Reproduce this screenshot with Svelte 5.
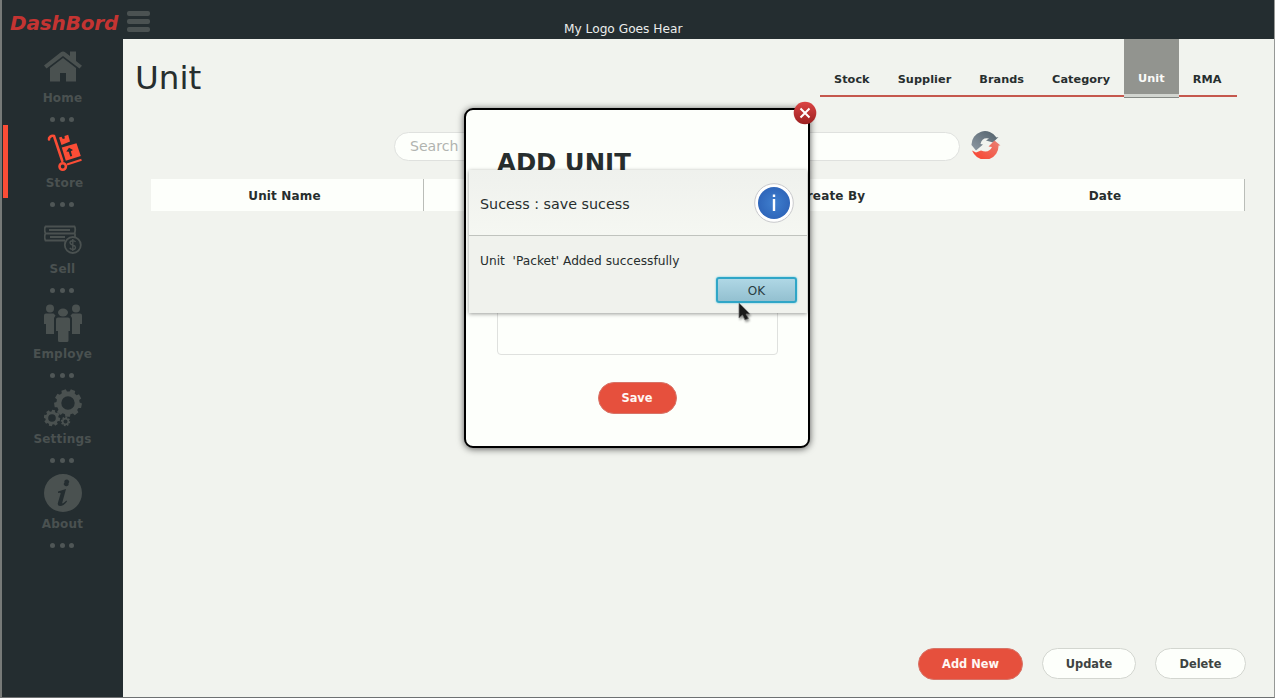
<script>
  const nav = ['Home', 'Store', 'Sell', 'Employe', 'Settings', 'About'];
  const tabs = ['Stock', 'Supplier', 'Brands', 'Category', 'Unit', 'RMA'];
  const activeNav = 'Store';
  const activeTab = 'Unit';

  // Outline of a toothed wheel centred on (cx, cy)
  function gear(cx, cy, outer, inner, teeth) {
    const points = [];
    const step = (Math.PI * 2) / teeth;
    for (let i = 0; i < teeth; i++) {
      const a = i * step + 0.2;
      for (const [r, o] of [[inner, -0.34], [outer, -0.24], [outer, 0.24], [inner, 0.34]]) {
        points.push(`${(cx + r * Math.cos(a + o * step)).toFixed(2)} ${(cy + r * Math.sin(a + o * step)).toFixed(2)}`);
      }
    }
    return `M${points.join('L')}Z`;
  }
  function hole(cx, cy, r) {
    return `M${cx - r} ${cy}a${r} ${r} 0 1 0 ${2 * r} 0a${r} ${r} 0 1 0 ${-2 * r} 0Z`;
  }
</script>

<div class="app">
  <header class="topbar">
    <div class="brand">
      <span class="brand-name">DashBord</span>
      <span class="burger"><i></i><i></i><i></i></span>
    </div>
    <div class="logo-text">My Logo Goes Hear</div>
  </header>

  <aside class="sidebar">
    {#each nav as item}
      <div class="nav-item" class:active={item === activeNav}>
        <svg class="nav-icon" viewBox="0 0 38 38" width="38" height="38">
          {#if item === 'Home'}
            <path d="M0 17.500L16.500 4.500Q19 2.500 21.500 4.500L26 8V3.500H32V13L38 17.800L35.500 20.500L19 8L2.500 20.500Z" />
            <path d="M6 20L19 10L32 20V33.500H22V25H16V33.500H6Z" />
          {:else if item === 'Store'}
            <path d="M5 6.500C4.500 4.500 7.500 2 10 3L18.300 28" fill="none" stroke="currentColor" stroke-width="2.600" stroke-linecap="round" />
            <path d="M15 4.500L17.500 3.800L18.800 6L20.800 5.500L20.500 3L24.200 1.800L26 8.500L17.500 12Z" />
            <path fill-rule="evenodd" d="M17.800 14.500L32.500 10.200L36.800 23L21.800 27.800ZM22.300 18.500L24.800 18.800L26.300 23.500L28.200 22.900L26.800 18.200L29 17L25 14.800Z" />
            <path d="M23 31.500L37.500 26.700" stroke="currentColor" stroke-width="2" />
            <circle cx="18.700" cy="33.500" r="3.200" fill="none" stroke="currentColor" stroke-width="2.600" />
          {:else if item === 'Sell'}
            <g fill="none" stroke="currentColor" stroke-width="1.800">
              <path d="M21 21.500H1.500Q-.2 18 1.500 14.500Q-.2 10 1.500 7.500H30.500Q32 10 30.500 14.500H1.500M31 14.500V18M5 11H26M6 18H21" />
              <circle cx="28.800" cy="26" r="8" />
              <path d="M31.500 23C30.500 21 26 21.300 26 23.700C26 26.500 31.500 25.500 31.500 28.500C31.500 31 27 31 25.800 28.800M28.800 20V32" stroke-width="1.400" />
            </g>
          {:else if item === 'Employe'}
            <circle cx="6" cy="4.500" r="4" />
            <circle cx="32" cy="4.500" r="4" />
            <path d="M2 9.500H9.500L11.500 11.500L10 14V30H2V20H0V11.500Q0 9.500 2 9.500ZM36 9.500H28.500L26.500 11.500L28 14V30H36V20H38V11.500Q38 9.500 36 9.500Z" />
            <ellipse cx="19" cy="8.500" rx="5" ry="4" />
            <path d="M14 13.500H24Q26 13.500 26 15.500V27H24.500V36.500Q24.500 38 23 38H15.500Q14 38 14 36.500V27H12V15.500Q12 13.500 14 13.500Z" />
          {:else if item === 'Settings'}
            <path fill-rule="evenodd" d={gear(24, 14, 14, 11.6, 9) + hole(24, 14, 6.700)} />
            <path fill-rule="evenodd" d={gear(8, 29, 8.300, 6.600, 8) + hole(8, 29, 3.800)} />
            <path fill-rule="evenodd" d={gear(21.500, 32.500, 4.800, 3.700, 8) + hole(21.500, 32.500, 2)} />
          {:else}
            <path fill-rule="evenodd" d={hole(19, 19, 19) + 'M20.500 8.500A2.400 2.200 0 1 1 24.500 9.300A2.400 2.200 0 1 1 20.500 8.500ZM14 17.500L22 15L18.300 28.500Q18 30 19.500 29L22.500 26.500L23 27.500Q19.500 32 16 32Q13 32 14 28.500L16.500 20Q17 18.500 15.500 18.800L14 19Z'} />
          {/if}
        </svg>
        <span class="nav-label">{item}</span>
      </div>
      <div class="dots"><i></i><i></i><i></i></div>
    {/each}
  </aside>

  <main class="content">
    <div class="page-head">
      <h1>Unit</h1>
      <nav class="tabs">
        {#each tabs as tab}
          <span class="tab" class:selected={tab === activeTab}>{tab}</span>
        {/each}
      </nav>
    </div>

    <div class="search-row">
      <div class="search">Search</div>
      <svg class="refresh" viewBox="0 0 30 28" width="30" height="28">
        <defs>
          <linearGradient id="slate" x1="0" y1="1" x2="1" y2="0"><stop offset="0" stop-color="#8f9aa4" /><stop offset="1" stop-color="#505f69" /></linearGradient>
          <linearGradient id="coral" x1="0" y1="1" x2="1" y2="0"><stop offset="0" stop-color="#fa3f2c" /><stop offset="1" stop-color="#e98275" /></linearGradient>
        </defs>
        <path d="M.5 14A13.500 13.500 0 0 1 25.500 6.500L27.500 6L22 11.500L15 9.500L18 7.500Q11 6 9.500 13L12 13.500L5 19.500Z" fill="url(#slate)" />
        <path d="M1 19.500L5 21.500L10 19.500Q18 22.500 21 16L17.500 15.500L23.500 9.500L29.500 14.500H27.500A13.500 13.500 0 0 1 3 23Z" fill="url(#coral)" />
      </svg>
    </div>

    <div class="table-head">
      <span>Unit Name</span>
      <span></span>
      <span>Create By</span>
      <span>Date</span>
    </div>

    <div class="actions">
      <button class="pill primary add">Add New</button>
      <button class="pill update">Update</button>
      <button class="pill delete">Delete</button>
    </div>
  </main>

  <section class="modal">
    <h2>ADD UNIT</h2>
    <div class="description"></div>
    <button class="pill primary save">Save</button>
    <svg class="close" viewBox="0 0 24 24" width="24" height="24">
      <defs><linearGradient id="closeFill" x1="0" y1="0" x2="0" y2="1"><stop offset="0" stop-color="#dc4545" /><stop offset="1" stop-color="#9c2020" /></linearGradient></defs>
      <circle cx="12" cy="12" r="11.300" fill="url(#closeFill)" />
      <path d="M7.500 7.500L16.500 16.500M16.500 7.500L7.500 16.500" stroke="#fff" stroke-width="2" />
    </svg>
  </section>

  <section class="alert">
    <div class="alert-head">
      <span>Sucess : save sucess</span>
      <svg viewBox="0 0 40 40" width="40" height="40">
        <defs><radialGradient id="infoFill"><stop offset="0" stop-color="#3f7fce" /><stop offset="1" stop-color="#2f66ba" /></radialGradient></defs>
        <circle cx="20" cy="20" r="19.300" fill="#fff" stroke="#c8c9cc" />
        <circle cx="20" cy="20" r="16" fill="url(#infoFill)" />
        <path d="M20 16V28M20 11.500V14" stroke="#fff" stroke-width="2.400" />
      </svg>
    </div>
    <div class="alert-body">
      <p>Unit&nbsp; 'Packet' Added successfully</p>
      <button class="ok">OK</button>
    </div>
  </section>

  <svg class="cursor" viewBox="0 0 16 22" width="16" height="22">
    <path d="M2 2V17L5.500 14L8 19L11.500 17.500L9 13H13Z" fill="#191919" stroke="#777" stroke-width=".7" />
  </svg>
</div>

<style>
  :global(body) { margin: 0; overflow: hidden; }
  * { box-sizing: border-box; }
  .app {
    position: relative;
    width: 1275px;
    height: 698px;
    display: grid;
    grid-template: 39px 1fr / 121px 1fr;
    background: #f1f3ee;
    border-left: 2px solid #777a78;
    border-right: 1px solid #969896;
    border-bottom: 1px solid #6e7172;
    font-family: "DejaVu Sans", sans-serif;
    color: #272e2e;
    overflow: hidden;
  }
  .app::before { content: ""; position: absolute; left: -2px; top: 0; width: 1px; height: 100%; background: #080a0a; }
  .topbar { grid-column: 1 / 3; display: flex; background: #242d30; }
  .brand { width: 562px; padding: 11px 0 0 8px; display: flex; gap: 9px; }
  .brand-name { width: 108px; font: italic bold 20px/24px "DejaVu Sans", sans-serif; color: #c43432; white-space: nowrap; letter-spacing: -.15px; }
  .burger { display: flex; flex-direction: column; gap: 3px; }
  .burger i { width: 23px; height: 5px; border-radius: 2px; background: #4b5252; }
  .logo-text { padding-top: 21px; font-size: 12.200px; line-height: 16px; color: #eceeec; white-space: nowrap; }

  .sidebar { background: #242d30; color: #4a5150; padding: 1px 0 0 1px; }
  .nav-item { height: 73px; padding: 8px 6px 0 0; display: flex; flex-direction: column; align-items: center; border-left: 5px solid transparent; }
  .nav-item.active { border-left-color: #fb4d36; }
  .nav-icon { display: block; fill: currentColor; flex: none; }
  .active .nav-icon { color: #fb4d36; }
  .nav-label { margin-top: 4px; font-weight: bold; font-size: 12px; line-height: 16px; letter-spacing: .2px; }
  .active .nav-label { padding-left: 4px; }
  .dots { height: 12.300px; padding: 4px 0 0 47px; display: flex; gap: 4.500px; }
  .dots i { width: 5px; height: 5px; border-radius: 50%; background: #4f5656; }

  .content { display: flex; flex-direction: column; min-width: 0; }
  .page-head { height: 59px; display: flex; justify-content: space-between; padding: 0 37px 0 12px; }
  h1 { margin: 20px 0 0; font-size: 32.500px; font-weight: normal; line-height: 39px; }
  .tabs { display: flex; height: 59px; width: 417px; }
  .tab { height: 58px; padding: 33px 14px 0; font-size: 11.250px; line-height: 16px; font-weight: bold; border-bottom: 2px solid #c5574d; text-align: center; letter-spacing: .06px; }
  .tab:last-child { flex: 1; text-align: left; }
  .tab.selected { height: 59px; padding-top: 32px; color: #fafaf8; background: linear-gradient(#92948f 55px, #d2d5d0 55px, #d2d5d0 58px, #858985 58px); border: 0; }
  .search-row { display: flex; align-items: flex-start; gap: 11px; padding: 34px 0 0 271px; height: 81px; }
  .search { width: 566px; height: 29px; border: 1px solid #dfe1de; border-radius: 15px; background: #fdfffb; padding-left: 15px; font-size: 14.100px; line-height: 27px; color: #b1b4b0; }
  .refresh { margin-top: -1px; }
  .table-head { display: grid; grid-template-columns: 273px 274px 273px 274px; width: 1094px; height: 32px; margin-left: 28px; background: #fdfffb; }
  .table-head span { height: 32px; border-right: 1px solid #babdb8; padding: 2px 5px 0 0; text-align: center; font-size: 12px; line-height: 30px; font-weight: bold; letter-spacing: .15px; }
  .table-head span:nth-child(3) { border-right-color: transparent; }
  .actions { margin-top: auto; padding: 0 28px 17px 0; display: flex; justify-content: flex-end; align-items: flex-start; }
  .pill { height: 31px; padding: 0; border: 1px solid #d3d6d0; border-radius: 16px; background: #fdfffb; color: #3e4442; font: bold 11.400px "DejaVu Sans", sans-serif; }
  .pill.primary { height: 32px; background: #e6503d; border-color: #d77468; color: #fff7f3; }
  .add { width: 105px; margin-right: 19px; }
  .update { width: 94px; margin-right: 19px; }
  .delete { width: 91px; }

  .modal {
    position: absolute;
    left: 462px;
    top: 108px;
    width: 346px;
    height: 340px;
    display: flex;
    flex-direction: column;
    align-items: center;
    padding: 39px 30px 0;
    border: 2px solid #000;
    border-radius: 9px;
    background: #fdfffb;
    box-shadow: 0 1px 7px rgba(0, 0, 0, .65);
  }
  h2 { align-self: flex-start; margin: 0 0 0 1px; font-size: 24.400px; line-height: 28px; }
  .description { width: 281px; height: 125px; margin-top: 53px; border: 1px solid #dfe1de; border-radius: 4px; }
  .save { width: 79px; flex: none; margin-top: 27px; }
  .close { position: absolute; right: -9px; top: -9px; }

  .alert { position: absolute; left: 467px; top: 170px; width: 338px; height: 143px; background: #f0f2ed; box-shadow: 0 1px 4px rgba(0, 0, 0, .4); }
  .alert-head { height: 66px; display: flex; justify-content: space-between; align-items: center; padding: 0 13px 0 11px; border-bottom: 1px solid #c0c3be; background: linear-gradient(#eff1ed, #f5f7f2); font-size: 14.300px; }
  .alert-head span { padding-top: 2px; }
  .alert-body { display: flex; flex-direction: column; padding: 17px 10px 0 11px; }
  p { margin: 0; font-size: 12.200px; line-height: 16px; }
  .ok { align-self: flex-end; width: 81px; height: 26px; margin-top: 8px; padding: 1px 0 0; border: 2px solid #2fa6c7; border-radius: 3px; background: linear-gradient(#afd7e5, #93c0d0); box-shadow: 0 0 2px #4dc5e4; color: #293d42; font: 12px "DejaVu Sans", sans-serif; }
  .cursor { position: absolute; left: 735px; top: 301px; filter: drop-shadow(1px 2px 1px rgba(0, 0, 0, .4)); }
</style>
